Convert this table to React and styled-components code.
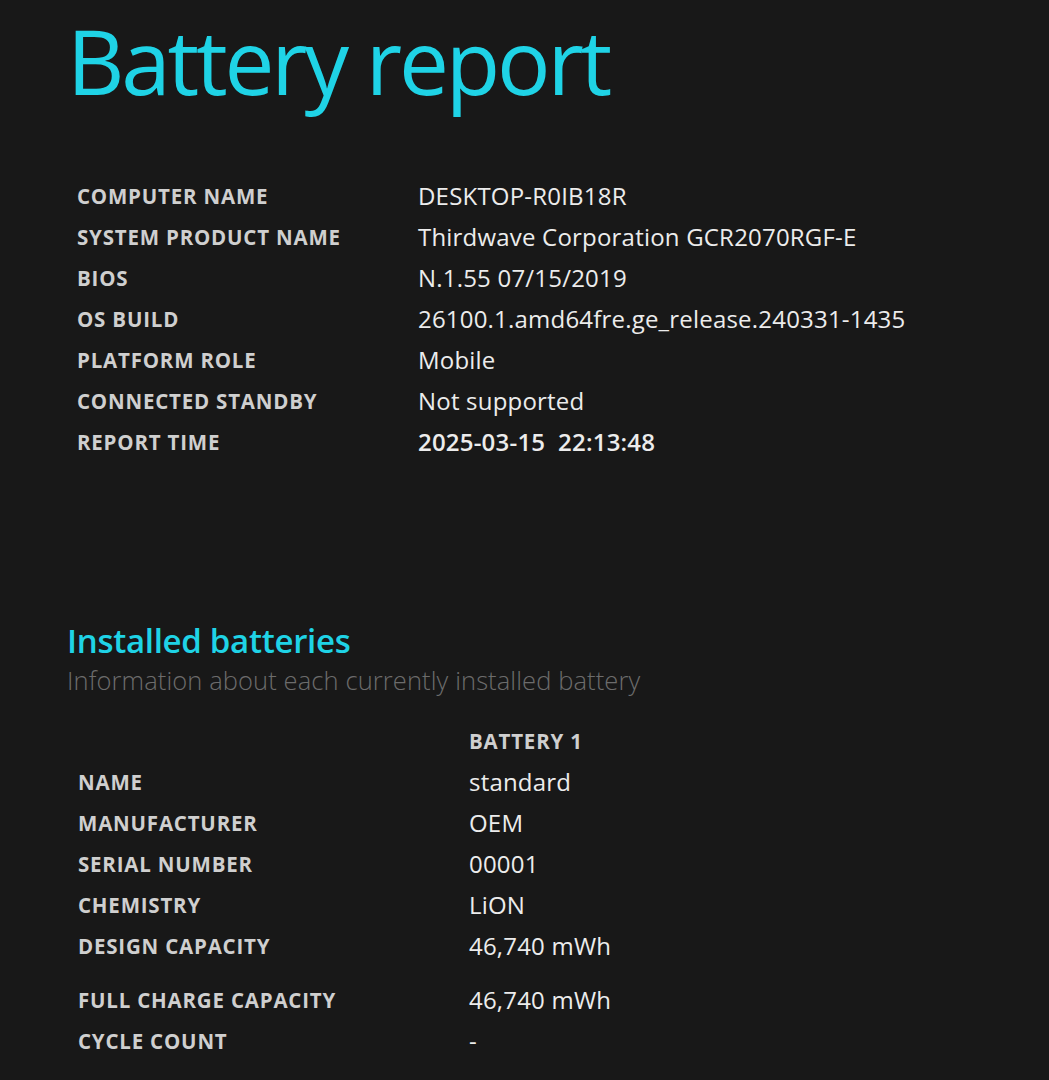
import React from "react";
import styled, { createGlobalStyle } from "styled-components";

const Global = createGlobalStyle`
  html, body { margin: 0; padding: 0; background: #181818; }
  body { font-family: "Open Sans", "Noto Sans", sans-serif; }
`;

const Page = styled.div`
  width: 1049px;
  min-height: 1080px;
  background: #181818;
  padding: 0 0 0 67px;
  box-sizing: border-box;
  overflow: hidden;
`;

const Title = styled.h1`
  margin: 0;
  padding: 0;
  font-family: "Open Sans", sans-serif;
  font-weight: 400;
  font-size: 89px;
  line-height: 122px;
  letter-spacing: -3.2px;
  color: #1fd3e6;
`;

const InfoTable = styled.div`
  display: grid;
  grid-template-columns: ${(p) => p.$labelWidth}px auto;
  grid-auto-rows: 41px;
  align-items: center;
  padding-left: ${(p) => p.$indent || 10}px;
  margin-top: ${(p) => p.$top || 0}px;
`;

const HeadRow = styled.div`
  grid-column: 1 / span 2;
  display: grid;
  grid-template-columns: subgrid;
  align-items: center;
  height: 38px;
`;

const Label = styled.div`
  font-family: "Open Sans", sans-serif;
  font-weight: 700;
  font-size: 20.5px;
  color: #cfcfcf;
  text-transform: uppercase;
  letter-spacing: 0.8px;
  white-space: nowrap;
`;

const Value = styled.div`
  font-family: "Open Sans", sans-serif;
  font-weight: ${(p) => (p.$strong ? 600 : 400)};
  font-size: 24px;
  color: #ececec;
  letter-spacing: 0.2px;
  white-space: pre;
`;

const Section = styled.section`
  margin-top: 159px;
`;

const SectionTitle = styled.h2`
  margin: 0;
  font-family: "Open Sans", sans-serif;
  font-weight: 600;
  font-size: 33px;
  line-height: 46px;
  margin-top: -3px;
  color: #1fd3e6;
  letter-spacing: -0.3px;
`;

const SectionSub = styled.div`
  margin-top: -2px;
  font-family: "Open Sans", sans-serif;
  font-weight: 300;
  font-size: 25.5px;
  line-height: 36px;
  color: #6c6c6c;
  letter-spacing: 0.1px;
`;

const ColHead = styled(Label)`
  grid-column: 2;
`;

const system = [
  ["Computer name", "DESKTOP-R0IB18R"],
  ["System product name", "Thirdwave Corporation GCR2070RGF-E"],
  ["BIOS", "N.1.55 07/15/2019"],
  ["OS build", "26100.1.amd64fre.ge_release.240331-1435"],
  ["Platform role", "Mobile"],
  ["Connected standby", "Not supported"],
  ["Report time", "2025-03-15  22:13:48", true],
];

const battery = [
  ["Name", "standard"],
  ["Manufacturer", "OEM"],
  ["Serial number", "00001"],
  ["Chemistry", "LiON"],
  ["Design capacity", "46,740 mWh"],
];

export default function App() {
  return (
    <Page>
      <Global />
      <Title>Battery report</Title>
      <InfoTable $labelWidth={341} $top={53}>
        {system.map(([l, v, s]) => (
          <React.Fragment key={l}>
            <Label>{l}</Label>
            <Value $strong={s}>{v}</Value>
          </React.Fragment>
        ))}
      </InfoTable>
      <Section>
        <SectionTitle>Installed batteries</SectionTitle>
        <SectionSub>Information about each currently installed battery</SectionSub>
        <InfoTable $labelWidth={391} $indent={11} $top={22}>
          <HeadRow>
            <ColHead>Battery 1</ColHead>
          </HeadRow>
          {battery.map(([l, v]) => (
            <React.Fragment key={l}>
              <Label>{l}</Label>
              <Value>{v}</Value>
            </React.Fragment>
          ))}
        </InfoTable>
        <InfoTable $labelWidth={391} $indent={11} $top={13}>
          <Label>Full charge capacity</Label>
          <Value>46,740 mWh</Value>
          <Label>Cycle count</Label>
          <Value>-</Value>
        </InfoTable>
      </Section>
    </Page>
  );
}
